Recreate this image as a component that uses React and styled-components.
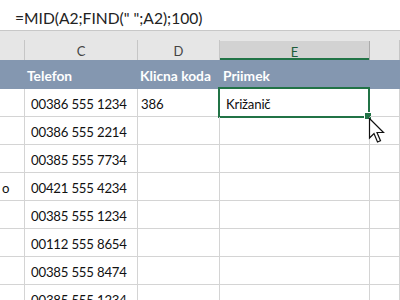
import React from "react";
import styled, { createGlobalStyle } from "styled-components";

const Global = createGlobalStyle`
  html, body { margin: 0; padding: 0; background: #e6e6e6; }
  body { width: 400px; height: 300px; overflow: hidden; font-family: Lato, "Open Sans", sans-serif; }
`;

const COLS = "25px 113px 82px 150px 1fr";

const Page = styled.div`
  position: relative;
  width: 400px;
  height: 300px;
  overflow: hidden;
  background: #e6e6e6;
`;

const FormulaBar = styled.div`
  height: 31px;
  box-sizing: border-box;
  background: #fff;
  border-bottom: 1px solid #c8c8c8;
  display: flex;
  align-items: center;
  padding: 6px 0 0 15px;
  font-size: 15.6px;
  color: #222;
`;

const Gap = styled.div`
  height: 9px;
`;

const ColHeaderRow = styled.div`
  display: grid;
  grid-template-columns: ${COLS};
  height: 20px;
`;

const ColHeader = styled.div`
  box-sizing: border-box;
  border-right: 1px solid ${(p) => (p.$selected ? "#ababab" : "#c6c6c6")};
  background: ${(p) => (p.$selected ? "#d2d2d2" : "#e6e6e6")};
  box-shadow: ${(p) => (p.$selected ? "inset 0 -2px 0 #217346" : "none")};
  color: ${(p) => (p.$selected ? "#1e5c3a" : "#444")};
  font-size: 13px;
  display: flex;
  align-items: center;
  justify-content: center;
  padding-top: 2px;
  margin-top: ${(p) => (p.$selected ? "1px" : "0")};
`;

const BlueRow = styled.div`
  display: grid;
  grid-template-columns: ${COLS};
  height: 29px;
  background: #8497b0;
`;

const BlueCell = styled.div`
  color: #fff;
  font-weight: 700;
  font-size: 13.8px;
  display: flex;
  align-items: center;
  padding-left: ${(p) => p.$pad || 2}px;
  padding-top: 1px;
  white-space: nowrap;
`;

const Row = styled.div`
  display: grid;
  grid-template-columns: ${COLS};
  height: 28px;
  background: #fff;
`;

const Cell = styled.div`
  position: relative;
  box-sizing: border-box;
  border-right: 1px solid #d4d4d4;
  border-bottom: 1px solid #d4d4d4;
  display: flex;
  align-items: center;
  padding-left: ${(p) => p.$pad ?? 6}px;
  padding-top: 2px;
  font-size: 13.2px;
  letter-spacing: -0.2px;
  color: #111;
  white-space: nowrap;
  overflow: visible;
`;

const Selection = styled.div`
  position: absolute;
  left: -2px;
  top: -2px;
  width: 152px;
  height: 31px;
  box-sizing: border-box;
  border: 2px solid #217346;
  pointer-events: none;
`;

const Handle = styled.div`
  position: absolute;
  right: -3px;
  bottom: -3px;
  width: 6px;
  height: 6px;
  box-sizing: border-box;
  background: #217346;
  outline: 1px solid #fff;
`;

const Cursor = styled.svg`
  position: absolute;
  left: 368px;
  top: 117px;
`;

const rows = [
  ["", "00386 555 1234", "386", "Križanič"],
  ["", "00386 555 2214", "", ""],
  ["", "00385 555 7734", "", ""],
  ["o", "00421 555 4234", "", ""],
  ["", "00385 555 1234", "", ""],
  ["", "00112 555 8654", "", ""],
  ["", "00385 555 8474", "", ""],
  ["", "00385 555 1234", "", ""],
];

export default function App() {
  return (
    <Page>
      <Global />
      <FormulaBar>=MID(A2;FIND(" ";A2);100)</FormulaBar>
      <Gap />
      <ColHeaderRow>
        <ColHeader />
        <ColHeader>C</ColHeader>
        <ColHeader>D</ColHeader>
        <ColHeader $selected>E</ColHeader>
        <ColHeader />
      </ColHeaderRow>
      <BlueRow>
        <BlueCell />
        <BlueCell $pad={2}>Telefon</BlueCell>
        <BlueCell $pad={2}>Klicna koda</BlueCell>
        <BlueCell $pad={3}>Priimek</BlueCell>
        <BlueCell />
      </BlueRow>
      {rows.map((r, i) => (
        <Row key={i}>
          <Cell $pad={2}>{r[0]}</Cell>
          <Cell>{r[1]}</Cell>
          <Cell $pad={3}>{r[2]}</Cell>
          <Cell $pad={6}>
            {r[3]}
            {i === 0 && (
              <Selection>
                <Handle />
              </Selection>
            )}
          </Cell>
          <Cell />
        </Row>
      ))}
      <Cursor width="20" height="28" viewBox="0 0 20 28">
        <path
          d="M1.5 1.5 L1.5 21 L6 16.5 L9.5 25 L12.5 23.7 L9 15.5 L15.5 15.5 Z"
          fill="#fff"
          stroke="#111"
          strokeWidth="1.2"
          strokeLinejoin="miter"
        />
      </Cursor>
    </Page>
  );
}
